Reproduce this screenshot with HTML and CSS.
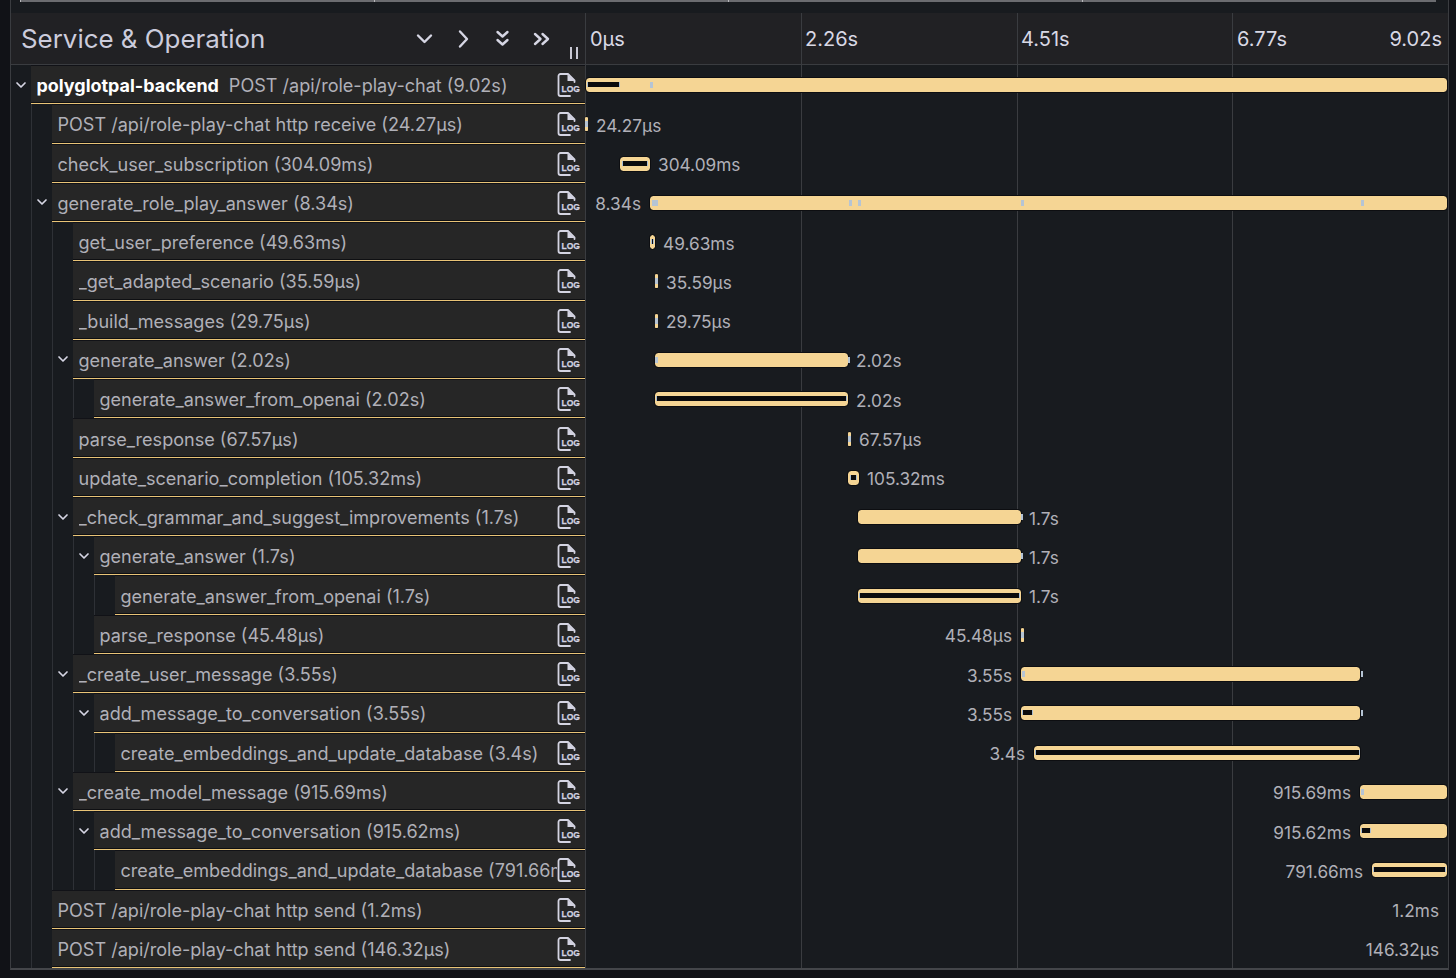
FILE: index.html
```html
<!DOCTYPE html>
<html lang="en">
<head>
<meta charset="utf-8">
<title>Trace</title>
<link rel="stylesheet" href="styles.css">
</head>
<body>
<svg class="defs" width="0" height="0" aria-hidden="true">
  <symbol id="c" viewBox="0 0 12 12"><path d="M2 4l4 4 4-4" fill="none" stroke="currentColor" stroke-width="1.7" stroke-linecap="round" stroke-linejoin="round"/></symbol>
  <symbol id="d" viewBox="0 0 23 24"><path d="M11 1H3.500a2 2 0 0 0-2 2v18a2 2 0 0 0 2 2H13M11 1l6.500 6.500M17.500 7.500V9" fill="none" stroke="currentColor" stroke-width="1.800" stroke-linecap="round" stroke-linejoin="round"/><path d="M10.500 1.500l7 6.500h-7z" fill="currentColor"/></symbol>
</svg>
<main class="panel">
  <div class="minimap"><i></i><i></i><i></i><i></i></div>
  <div class="lines"><i></i><i></i><i></i><i></i></div>
  <header class="head">
    <div class="head-left">
      <h1 class="title">Service &amp; Operation</h1>
      <div class="tools">
        <svg class="tool" viewBox="0 0 20 20"><path d="M3.500 6.500L10 13l6.500-6.500"/></svg>
        <svg class="tool" viewBox="0 0 20 20"><path d="M6.500 2.500L13.500 10l-7 7.500"/></svg>
        <svg class="tool" viewBox="0 0 20 20"><path d="M5 3l5 4.500L15 3M5 11l5 4.500 5-4.500"/></svg>
        <svg class="tool" viewBox="0 0 20 20"><path d="M3.500 5L9 10l-5.500 5M11 5l5.500 5-5.500 5"/></svg>
      </div>
      <div class="grip"><i></i><i></i></div>
    </div>
    <div class="ticks"><span>0µs</span><span>2.26s</span><span>4.51s</span><span class="last-tick"><b>6.77s</b><b>9.02s</b></span></div>
  </header>

  <div class="row"><div class="cell"><i class="guide"><svg class="chev"><use href="#c"/></svg></i><div class="name"><span class="text"><strong class="svc">polyglotpal-backend</strong>POST /api/role-play-chat (9.02s)</span><svg class="log" viewBox="0 0 23 24"><use href="#d"/><text x="4.500" y="18.700" textLength="18.500" lengthAdjust="spacingAndGlyphs">LOG</text></svg></div></div>
    <div class="track"><span class="bar" style="margin-left:0;width:863px"><u class="in" style="left:1px;width:33px"></u><u class="tk" style="left:64px"></u></span></div></div>

  <div class="row"><div class="cell"><i class="guide"></i><i class="guide"></i><div class="name"><span class="text">POST /api/role-play-chat http receive (24.27µs)</span><svg class="log" viewBox="0 0 23 24"><use href="#d"/><text x="4.500" y="18.700" textLength="18.500" lengthAdjust="spacingAndGlyphs">LOG</text></svg></div></div>
    <div class="track"><span class="bar thin" style="margin-left:0;width:3px"><u class="tk"></u></span><span class="lbl after-thin">24.27µs</span></div></div>

  <div class="row"><div class="cell"><i class="guide"></i><i class="guide"></i><div class="name"><span class="text">check_user_subscription (304.09ms)</span><svg class="log" viewBox="0 0 23 24"><use href="#d"/><text x="4.500" y="18.700" textLength="18.500" lengthAdjust="spacingAndGlyphs">LOG</text></svg></div></div>
    <div class="track"><span class="bar" style="margin-left:34px;width:32px"><u class="in" style="left:2px;width:26px"></u></span><span class="lbl">304.09ms</span></div></div>

  <div class="row"><div class="cell"><i class="guide"></i><i class="guide"><svg class="chev"><use href="#c"/></svg></i><div class="name"><span class="text">generate_role_play_answer (8.34s)</span><svg class="log" viewBox="0 0 23 24"><use href="#d"/><text x="4.500" y="18.700" textLength="18.500" lengthAdjust="spacingAndGlyphs">LOG</text></svg></div></div>
    <div class="track"><span class="lbl before" style="width:64px">8.34s</span><span class="bar" style="width:799px"><u class="tk" style="left:2px"></u><u class="tk" style="left:5px"></u><u class="tk" style="left:199px"></u><u class="tk" style="left:208px"></u><u class="tk" style="left:371px"></u><u class="tk" style="left:711px"></u></span></div></div>

  <div class="row"><div class="cell"><i class="guide"></i><i class="guide"></i><i class="guide"></i><div class="name"><span class="text">get_user_preference (49.63ms)</span><svg class="log" viewBox="0 0 23 24"><use href="#d"/><text x="4.500" y="18.700" textLength="18.500" lengthAdjust="spacingAndGlyphs">LOG</text></svg></div></div>
    <div class="track"><span class="bar" style="margin-left:64px;width:7px"><u class="in" style="left:1px;width:3px"></u></span><span class="lbl">49.63ms</span></div></div>

  <div class="row"><div class="cell"><i class="guide"></i><i class="guide"></i><i class="guide"></i><div class="name"><span class="text">_get_adapted_scenario (35.59µs)</span><svg class="log" viewBox="0 0 23 24"><use href="#d"/><text x="4.500" y="18.700" textLength="18.500" lengthAdjust="spacingAndGlyphs">LOG</text></svg></div></div>
    <div class="track"><span class="bar thin" style="margin-left:70px;width:3px"><u class="tk"></u></span><span class="lbl after-thin">35.59µs</span></div></div>

  <div class="row"><div class="cell"><i class="guide"></i><i class="guide"></i><i class="guide"></i><div class="name"><span class="text">_build_messages (29.75µs)</span><svg class="log" viewBox="0 0 23 24"><use href="#d"/><text x="4.500" y="18.700" textLength="18.500" lengthAdjust="spacingAndGlyphs">LOG</text></svg></div></div>
    <div class="track"><span class="bar thin" style="margin-left:70px;width:3px"><u class="tk"></u></span><span class="lbl after-thin">29.75µs</span></div></div>

  <div class="row"><div class="cell"><i class="guide"></i><i class="guide"></i><i class="guide"><svg class="chev"><use href="#c"/></svg></i><div class="name"><span class="text">generate_answer (2.02s)</span><svg class="log" viewBox="0 0 23 24"><use href="#d"/><text x="4.500" y="18.700" textLength="18.500" lengthAdjust="spacingAndGlyphs">LOG</text></svg></div></div>
    <div class="track"><span class="bar" style="margin-left:69px;width:195px"><u class="tk" style="left:0"></u><u class="tk out" style="left:193px"></u></span><span class="lbl">2.02s</span></div></div>

  <div class="row"><div class="cell"><i class="guide"></i><i class="guide"></i><i class="guide"></i><i class="guide"></i><div class="name"><span class="text">generate_answer_from_openai (2.02s)</span><svg class="log" viewBox="0 0 23 24"><use href="#d"/><text x="4.500" y="18.700" textLength="18.500" lengthAdjust="spacingAndGlyphs">LOG</text></svg></div></div>
    <div class="track"><span class="bar" style="margin-left:69px;width:195px"><u class="in" style="left:1px;width:191px"></u></span><span class="lbl">2.02s</span></div></div>

  <div class="row"><div class="cell"><i class="guide"></i><i class="guide"></i><i class="guide"></i><div class="name"><span class="text">parse_response (67.57µs)</span><svg class="log" viewBox="0 0 23 24"><use href="#d"/><text x="4.500" y="18.700" textLength="18.500" lengthAdjust="spacingAndGlyphs">LOG</text></svg></div></div>
    <div class="track"><span class="bar thin" style="margin-left:263px;width:3px"><u class="tk"></u></span><span class="lbl after-thin">67.57µs</span></div></div>

  <div class="row"><div class="cell"><i class="guide"></i><i class="guide"></i><i class="guide"></i><div class="name"><span class="text">update_scenario_completion (105.32ms)</span><svg class="log" viewBox="0 0 23 24"><use href="#d"/><text x="4.500" y="18.700" textLength="18.500" lengthAdjust="spacingAndGlyphs">LOG</text></svg></div></div>
    <div class="track"><span class="bar" style="margin-left:262px;width:13px"><u class="in" style="left:2px;width:7px"></u></span><span class="lbl">105.32ms</span></div></div>

  <div class="row"><div class="cell"><i class="guide"></i><i class="guide"></i><i class="guide"><svg class="chev"><use href="#c"/></svg></i><div class="name"><span class="text">_check_grammar_and_suggest_improvements (1.7s)</span><svg class="log" viewBox="0 0 23 24"><use href="#d"/><text x="4.500" y="18.700" textLength="18.500" lengthAdjust="spacingAndGlyphs">LOG</text></svg></div></div>
    <div class="track"><span class="bar" style="margin-left:272px;width:165px"><u class="tk out" style="left:163px"></u></span><span class="lbl">1.7s</span></div></div>

  <div class="row"><div class="cell"><i class="guide"></i><i class="guide"></i><i class="guide"></i><i class="guide"><svg class="chev"><use href="#c"/></svg></i><div class="name"><span class="text">generate_answer (1.7s)</span><svg class="log" viewBox="0 0 23 24"><use href="#d"/><text x="4.500" y="18.700" textLength="18.500" lengthAdjust="spacingAndGlyphs">LOG</text></svg></div></div>
    <div class="track"><span class="bar" style="margin-left:272px;width:165px"><u class="tk out" style="left:163px"></u></span><span class="lbl">1.7s</span></div></div>

  <div class="row"><div class="cell"><i class="guide"></i><i class="guide"></i><i class="guide"></i><i class="guide"></i><i class="guide"></i><div class="name"><span class="text">generate_answer_from_openai (1.7s)</span><svg class="log" viewBox="0 0 23 24"><use href="#d"/><text x="4.500" y="18.700" textLength="18.500" lengthAdjust="spacingAndGlyphs">LOG</text></svg></div></div>
    <div class="track"><span class="bar" style="margin-left:272px;width:165px"><u class="in" style="left:1px;width:161px"></u></span><span class="lbl">1.7s</span></div></div>

  <div class="row"><div class="cell"><i class="guide"></i><i class="guide"></i><i class="guide"></i><i class="guide"></i><div class="name"><span class="text">parse_response (45.48µs)</span><svg class="log" viewBox="0 0 23 24"><use href="#d"/><text x="4.500" y="18.700" textLength="18.500" lengthAdjust="spacingAndGlyphs">LOG</text></svg></div></div>
    <div class="track"><span class="lbl before" style="width:435px">45.48µs</span><span class="bar thin" style="margin-left:1px;width:3px"><u class="tk"></u></span></div></div>

  <div class="row"><div class="cell"><i class="guide"></i><i class="guide"></i><i class="guide"><svg class="chev"><use href="#c"/></svg></i><div class="name"><span class="text">_create_user_message (3.55s)</span><svg class="log" viewBox="0 0 23 24"><use href="#d"/><text x="4.500" y="18.700" textLength="18.500" lengthAdjust="spacingAndGlyphs">LOG</text></svg></div></div>
    <div class="track"><span class="lbl before" style="width:435px">3.55s</span><span class="bar" style="width:341px"><u class="tk" style="left:1px"></u><u class="tk out" style="left:340px"></u></span></div></div>

  <div class="row"><div class="cell"><i class="guide"></i><i class="guide"></i><i class="guide"></i><i class="guide"><svg class="chev"><use href="#c"/></svg></i><div class="name"><span class="text">add_message_to_conversation (3.55s)</span><svg class="log" viewBox="0 0 23 24"><use href="#d"/><text x="4.500" y="18.700" textLength="18.500" lengthAdjust="spacingAndGlyphs">LOG</text></svg></div></div>
    <div class="track"><span class="lbl before" style="width:435px">3.55s</span><span class="bar" style="width:341px"><u class="in" style="left:1px;width:11px"></u><u class="tk out" style="left:340px"></u></span></div></div>

  <div class="row"><div class="cell"><i class="guide"></i><i class="guide"></i><i class="guide"></i><i class="guide"></i><i class="guide"></i><div class="name"><span class="text">create_embeddings_and_update_database (3.4s)</span><svg class="log" viewBox="0 0 23 24"><use href="#d"/><text x="4.500" y="18.700" textLength="18.500" lengthAdjust="spacingAndGlyphs">LOG</text></svg></div></div>
    <div class="track"><span class="lbl before" style="width:448px">3.4s</span><span class="bar" style="width:328px"><u class="in" style="left:1px;width:325px"></u></span></div></div>

  <div class="row"><div class="cell"><i class="guide"></i><i class="guide"></i><i class="guide"><svg class="chev"><use href="#c"/></svg></i><div class="name"><span class="text">_create_model_message (915.69ms)</span><svg class="log" viewBox="0 0 23 24"><use href="#d"/><text x="4.500" y="18.700" textLength="18.500" lengthAdjust="spacingAndGlyphs">LOG</text></svg></div></div>
    <div class="track"><span class="lbl before" style="width:774px">915.69ms</span><span class="bar" style="width:89px"><u class="tk" style="left:1px"></u></span></div></div>

  <div class="row"><div class="cell"><i class="guide"></i><i class="guide"></i><i class="guide"></i><i class="guide"><svg class="chev"><use href="#c"/></svg></i><div class="name"><span class="text">add_message_to_conversation (915.62ms)</span><svg class="log" viewBox="0 0 23 24"><use href="#d"/><text x="4.500" y="18.700" textLength="18.500" lengthAdjust="spacingAndGlyphs">LOG</text></svg></div></div>
    <div class="track"><span class="lbl before" style="width:774px">915.62ms</span><span class="bar" style="width:89px"><u class="in" style="left:1px;width:10px"></u></span></div></div>

  <div class="row"><div class="cell"><i class="guide"></i><i class="guide"></i><i class="guide"></i><i class="guide"></i><i class="guide"></i><div class="name"><span class="text">create_embeddings_and_update_database (791.66ms)</span><svg class="log" viewBox="0 0 23 24"><use href="#d"/><text x="4.500" y="18.700" textLength="18.500" lengthAdjust="spacingAndGlyphs">LOG</text></svg></div></div>
    <div class="track"><span class="lbl before" style="width:786px">791.66ms</span><span class="bar" style="width:77px"><u class="in" style="left:1px;width:73px"></u></span></div></div>

  <div class="row"><div class="cell"><i class="guide"></i><i class="guide"></i><div class="name"><span class="text">POST /api/role-play-chat http send (1.2ms)</span><svg class="log" viewBox="0 0 23 24"><use href="#d"/><text x="4.500" y="18.700" textLength="18.500" lengthAdjust="spacingAndGlyphs">LOG</text></svg></div></div>
    <div class="track"><span class="lbl before" style="width:862px">1.2ms</span></div></div>

  <div class="row"><div class="cell"><i class="guide"></i><i class="guide"></i><div class="name"><span class="text">POST /api/role-play-chat http send (146.32µs)</span><svg class="log" viewBox="0 0 23 24"><use href="#d"/><text x="4.500" y="18.700" textLength="18.500" lengthAdjust="spacingAndGlyphs">LOG</text></svg></div></div>
    <div class="track"><span class="lbl before" style="width:862px">146.32µs</span></div></div>
</main>
</body>
</html>
```

FILE: styles.css
```css
* { box-sizing: border-box; }
html, body { margin: 0; padding: 0; }
body {
  background: #111217;
  color: #ccccdc;
  font-family: Inter, "Liberation Sans", sans-serif;
  height: 978px;
  overflow: hidden;
}
.defs { position: absolute; }
.panel {
  position: relative;
  width: 1439px;
  margin-left: 10px;
  background: #181b1f;
  border-left: 1px solid #3a3c40;
  border-right: 1px solid #3a3c40;
  border-bottom: 2px solid #44464a;
}
.minimap {
  display: grid;
  grid-template-columns: repeat(4, 354px);
  height: 13px;
  margin-left: 9px;
}
.minimap i {
  height: 2px;
  background: #6b6c70;
  border-left: 1px solid #b8b8bc;
}
.lines {
  position: absolute;
  top: 13px;
  bottom: 0;
  left: 574px;
  right: 0;
  z-index: 1;
  display: grid;
  grid-template-columns: 216px 216px 215px 215px;
  pointer-events: none;
}
.lines i { border-left: 1px solid #3a3c40; }

.head {
  display: flex;
  height: 52px;
  background: #212124;
  border-bottom: 1px solid #3a3c40;
}
.head-left {
  display: flex;
  align-items: center;
  width: 574px;
  flex: none;
  padding-left: 10px;
  padding-right: 7px;
}
.title {
  flex: 1;
  margin: 0;
  font-size: 25.900px;
  font-weight: 400;
  color: #ccccdc;
}
.tools { display: flex; margin-right: 9px; }
.tool {
  width: 39px;
  height: 20px;
  fill: none;
  stroke: #d6d6e4;
  stroke-width: 2.400;
  stroke-linecap: round;
  stroke-linejoin: round;
}
.grip {
  display: flex;
  gap: 4px;
  align-self: flex-end;
  width: 8px;
  height: 12px;
  margin-bottom: 5px;
}
.grip i { width: 2px; background: #c8c8d4; }
.ticks {
  flex: 1;
  display: grid;
  grid-template-columns: 215px 216px 216px 215px;
  align-items: center;
  font-size: 20px;
  color: #d8d8e4;
}
.ticks > span { padding-left: 5px; padding-right: 5px; }
.last-tick { display: flex; justify-content: space-between; }
.last-tick b { font-weight: 400; }

.row { display: flex; height: 39.270px; }
.cell { display: flex; width: 574px; flex: none; }
.guide {
  display: flex;
  align-items: center;
  justify-content: center;
  flex: none;
  width: 21px;
  border-left: 1px solid #2e3136;
  color: #d6d6e4;
}
.guide:first-child { width: 20px; border-left: 0; }
.chev { width: 12px; height: 12px; }
.name {
  flex: 1;
  min-width: 0;
  display: flex;
  align-items: center;
  padding-left: 5.500px;
  padding-top: 1px;
  background: #262626;
  border-top: 1px solid #111217;
  border-bottom: 1px solid #e9c477;
  box-shadow: inset 0 -1px #0e0f12;
}
.text {
  flex: 1;
  min-width: 0;
  overflow: hidden;
  white-space: nowrap;
  font-size: 18.070px;
  color: #b0b0b8;
}
.svc { color: #fff; font-size: 17.950px; font-weight: 700; margin-right: 10px; }
.log {
  flex: none;
  width: 23px;
  height: 24px;
  margin: 0 5px 0 0;
  color: #d4d4e2;
  overflow: visible;
}
.log text {
  font-family: "Liberation Sans", sans-serif;
  font-size: 9px;
  font-weight: 700;
  fill: currentColor;
  stroke: currentColor;
  stroke-width: 0.250;
}
.track {
  position: relative;
  z-index: 2;
  flex: 1;
  display: flex;
  align-items: center;
  padding-top: 1px;
  min-width: 0;
  white-space: nowrap;
}
.bar {
  position: relative;
  flex: none;
  height: 16px;
  border-radius: 4px;
  background: #f5d594;
  border: 1px solid #0d0e11;
  background-clip: padding-box;
}
.bar.thin {
  border-left: 0;
  border-right: 0;
  border-radius: 2px;
}
.bar.thin .tk { left: 0; }
.in {
  position: absolute;
  top: 4px;
  height: 5px;
  background: #0b0b0c;
  border-left: 1px solid #a9bdd2;
  border-right: 1px solid #a9bdd2;
  text-decoration: none;
}
.tk {
  position: absolute;
  top: 4px;
  width: 3px;
  height: 6px;
  background: #b5c4d4;
  text-decoration: none;
}
.tk.out { width: 2px; }
.lbl {
  font-size: 17.250px;
  color: #b0b0b8;
  margin-left: 7px;
  margin-top: 2px;
}
.lbl.after-thin { margin-left: 8px; }
.lbl.before {
  flex: none;
  margin-left: 0;
  padding-right: 8px;
  text-align: right;
}
```
